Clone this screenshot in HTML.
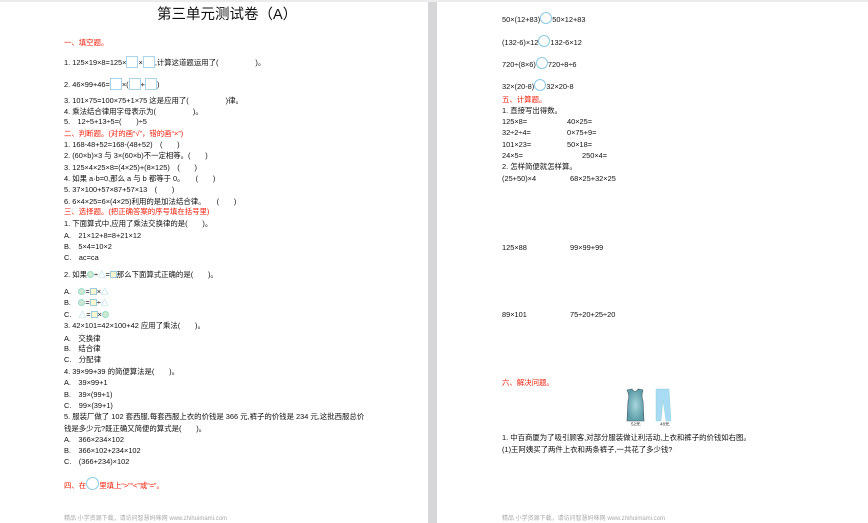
<!DOCTYPE html>
<html><head><meta charset="utf-8"><style>
*{margin:0;padding:0}
body{width:868px;height:523px;background:#d6d6d8;position:relative;overflow:hidden;font-family:"Liberation Sans","Noto Sans CJK SC",sans-serif;font-size:7.4px;color:#111}
.pg{position:absolute;top:0;background:#fff;height:523px}
.l{position:absolute;white-space:nowrap;line-height:8px}
.r{color:#f01e0a}
.b{display:inline-block;width:10px;height:10px;border:1px solid #a9d4ea;vertical-align:-3px}
.c{display:inline-block;width:10px;height:10px;border:1px solid #8ccbe6;border-radius:50%;vertical-align:-2px}
.ci{display:inline-block;width:5px;height:5px;border-radius:50%;background:#cfe8d0;border:1px solid #9dc;vertical-align:-1px}
.sq{display:inline-block;width:5px;height:5px;background:#fbf6cf;border:1px solid #9cd;vertical-align:-1px}
.tr{color:#6cc0e8}
.ft{color:#aaa;font-size:6px}
</style></head><body>
<div class="pg" style="left:0;width:428px"></div>
<div class="pg" style="left:437px;width:431px"></div>
<div style="position:absolute;left:0;top:0;width:868px;height:2px;background:#ececec"></div>

<div class="l" style="left:157px;top:7px;font-size:14.5px;line-height:17px;color:#111">第三单元测试卷（A）</div>
<div class="l r" style="left:64px;top:39px">一、填空题。</div>
<div class="l" style="left:64px;top:56px">1. 125×19×8=125×<span class="b"></span>×<span class="b"></span>,计算这道题运用了(　　　　　)。</div>
<div class="l" style="left:64px;top:78px">2. 46×99+46=<span class="b"></span>×(<span class="b"></span>+<span class="b"></span>)</div>
<div class="l" style="left:64px;top:97px">3. 101×75=100×75+1×75 这是应用了(　　　　　)律。</div>
<div class="l" style="left:64px;top:108px">4. 乘法结合律用字母表示为(　　　　　)。</div>
<div class="l" style="left:64px;top:118px">5.　12÷5+13÷5=(　　)÷5</div>
<div class="l r" style="left:64px;top:130px">二、判断题。(对的画“√”，错的画“×”)</div>
<div class="l" style="left:64px;top:141px">1. 168-48+52=168-(48+52)　(　　)</div>
<div class="l" style="left:64px;top:152px">2. (60×b)×3 与 3×(60×b)不一定相等。(　　)</div>
<div class="l" style="left:64px;top:164px">3. 125×4×25×8=(4×25)+(8×125)　(　　)</div>
<div class="l" style="left:64px;top:175px">4. 如果 a·b=0,那么 a 与 b 都等于 0。　　(　　)</div>
<div class="l" style="left:64px;top:186px">5. 37×100+57×87+57×13　(　　)</div>
<div class="l" style="left:64px;top:198px">6. 6×4×25=6×(4×25)利用的是加法结合律。　　(　　)</div>
<div class="l r" style="left:64px;top:208px">三、选择题。(把正确答案的序号填在括号里)</div>
<div class="l" style="left:64px;top:220px">1. 下面算式中,应用了乘法交换律的是(　　)。</div>
<div class="l" style="left:64px;top:232px">A.　21×12+8=8+21×12</div>
<div class="l" style="left:64px;top:243px">B.　5×4=10×2</div>
<div class="l" style="left:64px;top:254px">C.　ac=ca</div>
<div class="l" style="left:64px;top:271px">2. 如果<span class="ci"></span>÷<span class="tr">△</span>=<span class="sq"></span>那么下面算式正确的是(　　)。</div>
<div class="l" style="left:64px;top:288px">A.　<span class="ci"></span>=<span class="sq"></span>×<span class="tr">△</span></div>
<div class="l" style="left:64px;top:299px">B.　<span class="ci"></span>=<span class="sq"></span>÷<span class="tr">△</span></div>
<div class="l" style="left:64px;top:311px">C.　<span class="tr">△</span>=<span class="sq"></span>×<span class="ci"></span></div>
<div class="l" style="left:64px;top:322px">3. 42×101=42×100+42 应用了乘法(　　)。</div>
<div class="l" style="left:64px;top:335px">A.　交换律</div>
<div class="l" style="left:64px;top:345px">B.　结合律</div>
<div class="l" style="left:64px;top:356px">C.　分配律</div>
<div class="l" style="left:64px;top:368px">4. 39×99+39 的简便算法是(　　)。</div>
<div class="l" style="left:64px;top:379px">A.　39×99+1</div>
<div class="l" style="left:64px;top:391px">B.　39×(99+1)</div>
<div class="l" style="left:64px;top:402px">C.　99×(39+1)</div>
<div class="l" style="left:64px;top:413px">5. 服装厂做了 102 套西服,每套西服上衣的价钱是 366 元,裤子的价钱是 234 元,这批西服总价</div>
<div class="l" style="left:64px;top:425px">钱是多少元?既正确又简便的算式是(　　)。</div>
<div class="l" style="left:64px;top:436px">A.　366×234×102</div>
<div class="l" style="left:64px;top:447px">B.　366×102+234×102</div>
<div class="l" style="left:64px;top:458px">C.　(366+234)×102</div>
<div class="l r" style="left:64px;top:477px">四、在<span class="c" style="width:11px;height:11px"></span>里填上“&gt;”“&lt;”或“=”。</div>
<div class="l ft" style="left:64px;top:515px">精品 小学资源下载，请访问智慧妈咪网 www.zhihuimami.com</div>

<div class="l" style="left:502px;top:12px">50×(12+83)<span class="c"></span>50×12+83</div>
<div class="l" style="left:502px;top:35px">(132-6)×12<span class="c"></span>132-6×12</div>
<div class="l" style="left:502px;top:57px">720÷(8×6)<span class="c"></span>720÷8÷6</div>
<div class="l" style="left:502px;top:79px">32×(20-8)<span class="c"></span>32×20-8</div>
<div class="l r" style="left:502px;top:96px">五、计算题。</div>
<div class="l" style="left:502px;top:107px">1. 直接写出得数。</div>
<div class="l" style="left:502px;top:118px">125×8=</div><div class="l" style="left:567px;top:118px">40×25=</div>
<div class="l" style="left:502px;top:129px">32÷2÷4=</div><div class="l" style="left:567px;top:129px">0×75+9=</div>
<div class="l" style="left:502px;top:141px">101×23=</div><div class="l" style="left:567px;top:141px">50×18=</div>
<div class="l" style="left:502px;top:152px">24×5=</div><div class="l" style="left:582px;top:152px">250×4=</div>
<div class="l" style="left:502px;top:163px">2. 怎样简便就怎样算。</div>
<div class="l" style="left:502px;top:175px">(25+50)×4</div><div class="l" style="left:570px;top:175px">68×25+32×25</div>
<div class="l" style="left:502px;top:244px">125×88</div><div class="l" style="left:570px;top:244px">99×99+99</div>
<div class="l" style="left:502px;top:311px">89×101</div><div class="l" style="left:570px;top:311px">75÷20+25÷20</div>
<div class="l r" style="left:502px;top:379px">六、解决问题。</div>
<svg style="position:absolute;left:624px;top:388px" width="60" height="38">
<defs><radialGradient id="g"><stop offset="0" stop-color="#a8d6dc"/><stop offset="1" stop-color="#5e9ea8"/></radialGradient></defs>
<path d="M3 2 L8 1 Q11 6 14 1 L19 2 Q17 8 19 13 L20 33 L3 33 L4 13 Q6 8 3 2Z" fill="url(#g)" stroke="#456" stroke-width=".6"/>
<path d="M32 1 L45 1 L47 33 L42 33 L39 12 L37 33 L32 33Z" fill="#a9dcf4" stroke="#8cc" stroke-width=".4"/>
<text x="7" y="37.5" font-size="4.5" fill="#333" font-family="Liberation Sans,Noto Sans CJK SC,sans-serif">52元</text>
<text x="36" y="37.5" font-size="4.5" fill="#333" font-family="Liberation Sans,Noto Sans CJK SC,sans-serif">48元</text>
</svg>
<div class="l" style="left:502px;top:434px">1. 中百商厦为了吸引顾客,对部分服装做让利活动,上衣和裤子的价钱如右图。</div>
<div class="l" style="left:502px;top:446px">(1)王阿姨买了两件上衣和两条裤子,一共花了多少钱?</div>
<div class="l ft" style="left:502px;top:515px">精品 小学资源下载，请访问智慧妈咪网 www.zhihuimami.com</div>
</body></html>
